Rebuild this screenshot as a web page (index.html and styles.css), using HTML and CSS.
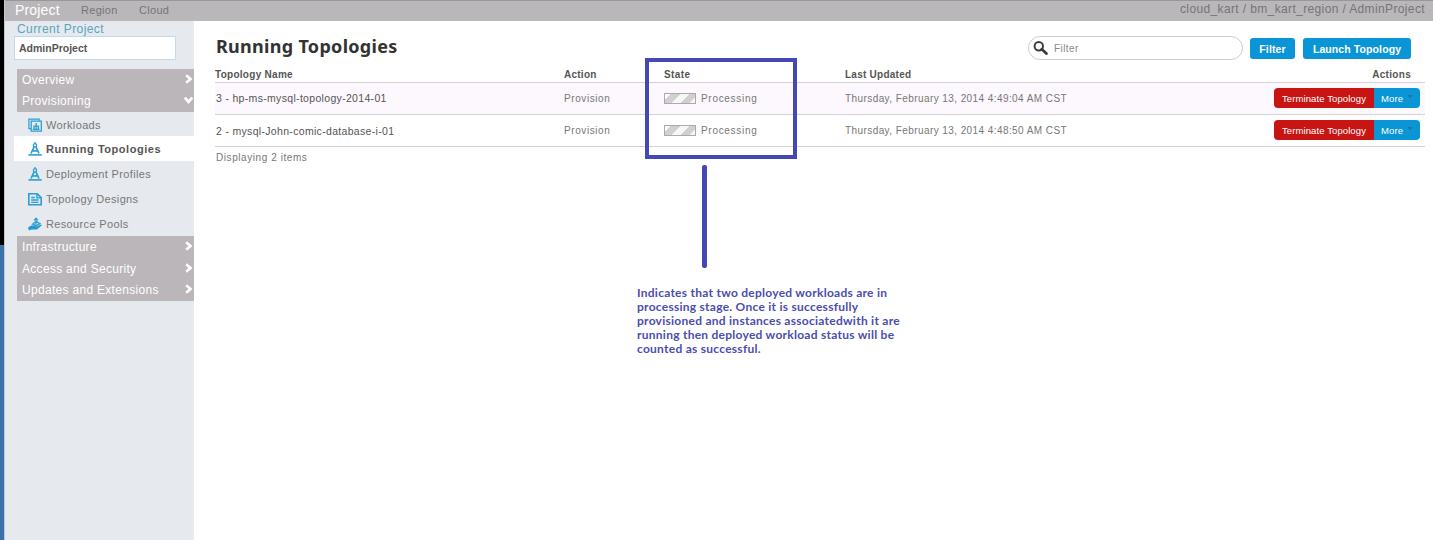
FILE: index.html
```html
<!DOCTYPE html>
<html lang="en">
<head>
<meta charset="utf-8">
<title>Running Topologies</title>
<link rel="stylesheet" href="styles.css">
</head>
<body>
<svg width="0" height="0" class="defs">
  <symbol id="chev" viewBox="0 0 8 10"><path d="M1.7 1.3 6 5 1.7 8.7" fill="none" stroke="#fff" stroke-width="2.7"/></symbol>
  <symbol id="compass" viewBox="0 0 14 14"><path d="M.5 12.9h13.2" stroke-width="1.6"/><circle cx="7" cy="3.3" r="1.6" stroke-width="1.3"/><path d="M7 .3v1.4M6.1 4.8 3 11.5M7.9 4.8l3.1 6.7M4.2 8.4q2.8 1.2 5.6 0" stroke-width="1.7"/></symbol>
</svg>
<div class="desktop">
  <div class="window">
    <header class="topbar">
      <nav class="tabs"><a class="tab current">Project</a><a class="tab region">Region</a><a class="tab cloud">Cloud</a></nav>
      <div class="crumbs">cloud_kart / bm_kart_region / AdminProject</div>
    </header>
    <div class="body">
      <aside class="sidebar">
        <div class="cur-label">Current Project</div>
        <div class="project">AdminProject</div>
        <div class="group first"><span>Overview</span><svg class="chev"><use href="#chev"/></svg></div>
        <div class="group"><span class="prov">Provisioning</span><svg class="chev down"><use href="#chev"/></svg></div>
        <ul class="menu">
          <li><svg class="ico" viewBox="0 0 14 14"><path d="M3 10.7H.9V1.2h10.3v1.5" stroke-width="1.2"/><path d="M3.2 3.2h10.1v10H3.2z" stroke-width="1.3"/><path d="M4.8 11.4h6.8M8.2 5v2.6M6 11V8.2h4.4V11M8.2 8v3" stroke-width="1.3"/></svg><span class="m1">Workloads</span></li>
          <li class="active"><svg class="ico"><use href="#compass"/></svg><span class="m2">Running Topologies</span></li>
          <li><svg class="ico"><use href="#compass"/></svg><span class="m3">Deployment Profiles</span></li>
          <li><svg class="ico" viewBox="0 0 14 14"><path d="M.8 1.8h8.4l4 3.8v7.2H.8z" stroke-width="1.6"/><path d="M8.9 1.8v4.1h4.3M3.2 5.5h3.6M3.2 8h7.4M3.2 10.4h7.4" stroke-width="1.4"/></svg><span class="m4">Topology Designs</span></li>
          <li><svg class="ico" viewBox="0 0 14 14"><path d="M0 10.6 3.3 8.4h3.4l2 1 4.4-1.9.8.8-5 4.3H3.6L1 13.6z" fill="#1d9bd7" stroke="none"/><path d="M8 1.5v6M6 3.4 8 1.2l2 2.2M4.5 7.2 8 4.4l4 2.4L8 8.7z" stroke-width="1.3"/></svg><span class="m5">Resource Pools</span></li>
        </ul>
        <div class="group"><span>Infrastructure</span><svg class="chev"><use href="#chev"/></svg></div>
        <div class="group"><span>Access and Security</span><svg class="chev"><use href="#chev"/></svg></div>
        <div class="group"><span>Updates and Extensions</span><svg class="chev"><use href="#chev"/></svg></div>
      </aside>
      <main class="main">
        <div class="heading">
          <h1>Running Topologies</h1>
          <div class="tools">
            <div class="search"><svg class="mag" viewBox="0 0 15 14"><circle cx="5.8" cy="5.3" r="4.2" fill="none" stroke="#3b3b3b" stroke-width="2"/><path d="m8.8 8.3 4.6 4.2" stroke="#3b3b3b" stroke-width="2.8" stroke-linecap="round"/></svg><span>Filter</span></div>
            <button class="btn filter">Filter</button>
            <button class="btn launch">Launch Topology</button>
          </div>
        </div>
        <div class="table">
          <div class="row head"><div>Topology Name</div><div class="h-act">Action</div><div class="h-st">State</div><div class="h-upd">Last Updated</div><div class="h-actions">Actions</div></div>
          <div class="row item tinted"><div class="name n1">3 - hp-ms-mysql-topology-2014-01</div><div class="action">Provision</div><div class="state"><i class="bar"></i><span>Processing</span></div><div>Thursday, February 13, 2014 4:49:04 AM CST</div><div class="ops"><button class="term">Terminate Topology</button><button class="more">More<i class="caret"></i></button></div></div>
          <div class="row item"><div class="name n2">2 - mysql-John-comic-database-i-01</div><div class="action">Provision</div><div class="state"><i class="bar"></i><span>Processing</span></div><div>Thursday, February 13, 2014 4:48:50 AM CST</div><div class="ops"><button class="term">Terminate Topology</button><button class="more">More<i class="caret"></i></button></div></div>
        </div>
        <div class="count">Displaying 2 items</div>
      </main>
    </div>
  </div>
  <div class="mark-box"></div>
  <div class="mark-line"></div>
  <div class="note"><div class="l1">Indicates that two deployed workloads are in</div><div class="l2">processing stage. Once it is successfully</div><div class="l3">provisioned and instances associatedwith it are</div><div class="l4">running then deployed workload status will be</div><div class="l5">counted as successful.</div></div>
</div>
</body>
</html>
```
FILE: styles.css
```css
* { box-sizing: border-box; }
body { margin: 0; background: #fff; font-family: "Liberation Sans", Arial, sans-serif; font-size: 10px; color: #777; white-space: nowrap; }
button { font-family: inherit; border: 0; padding: 0; margin: 0; white-space: nowrap; }
.defs { position: absolute; }
.desktop { position: relative; width: 1433px; height: 540px; padding-left: 4px; overflow: hidden; background: linear-gradient(#000 245px, #3b70a8 245px); }
.window { height: 540px; display: flex; flex-direction: column; background: #fff; border-left: 1px solid #c5c8cd; }
.topbar { height: 21px; flex: none; display: flex; justify-content: space-between; background: #bab7ba; border-top: 1px solid #999799; }
.tabs { display: flex; padding-left: 10px; line-height: 18px; }
.tab { font-size: 11px; letter-spacing: .3px; color: #777477; }
.tab.current { width: 66px; font-size: 14px; letter-spacing: .18px; color: #fff; }
.tab.region { width: 58px; }
.crumbs { padding-right: 8px; font-size: 12px; line-height: 16px; letter-spacing: .37px; color: #777477; }
.body { flex: 1; display: flex; }
.sidebar { width: 189px; background: #e6e9ee; }
.cur-label { padding-left: 12px; height: 15px; line-height: 16px; font-size: 12px; letter-spacing: .42px; color: #5aa5bd; }
.project { margin-left: 9px; width: 162px; height: 24px; padding-left: 4px; border: 1px solid #c5dae8; background: #fff; font-weight: bold; font-size: 10.5px; line-height: 22px; color: #555; }
.group { height: 21.6px; margin-left: 12px; padding: 0 1px 0 5px; display: flex; justify-content: space-between; align-items: center; background: #bab6ba; color: #fff; font-size: 12px; letter-spacing: .3px; }
.group.first { margin-top: 9px; }
.chev { width: 9px; height: 10px; margin-top: -2px; }
.chev.down { transform: rotate(90deg); }
.menu { list-style: none; margin: 0; padding: 0 0 0 9px; height: 124px; }
.menu li { height: 25px; display: flex; align-items: center; gap: 4px; padding-left: 14px; font-size: 11px; letter-spacing: .35px; color: #777; }
.menu li span { padding-top: 1px; }
.menu li:first-child { height: 24px; }
.menu li.active { background: #fff; color: #555; font-weight: bold; letter-spacing: .53px; }
.ico { width: 14px; height: 14px; margin-top: 1px; fill: none; stroke: #2b9fd2; }
.main { flex: 1; padding: 0 8px 0 21px; background: #fff; }
.heading { display: flex; justify-content: space-between; height: 47px; padding-top: 15px; }
h1 { margin: 0; padding-left: 1px; margin-top: -1px; font: bold 18px/22px "Noto Sans", sans-serif; letter-spacing: .3px; color: #333; }
.tools { display: flex; align-items: flex-start; padding-right: 14px; }
.search { width: 215px; height: 24px; border: 1px solid #ccc; border-radius: 12px; display: flex; align-items: center; padding-left: 4px; gap: 6px; font-size: 10px; letter-spacing: .4px; color: #888; }
.mag { width: 15px; height: 14px; }
.btn { margin-top: 2px; height: 21px; border-radius: 3px; background: #0a96d6; color: #fff; font-size: 10.5px; font-weight: bold; letter-spacing: .1px; }
.filter { width: 45px; margin-left: 7px; }
.launch { width: 108px; margin-left: 8px; }
.row { display: grid; grid-template-columns: 349px 100px 181px 1fr auto; align-items: center; border-bottom: 1px solid #d3d1d4; }
.row.head { height: 15px; line-height: 14px; font-weight: bold; color: #555; letter-spacing: .28px; }
.h-act, .h-upd { letter-spacing: .25px; }
.h-st { letter-spacing: .4px; }
.h-actions { padding-right: 14px; letter-spacing: .3px; }
.item { height: 32px; letter-spacing: .42px; }
.item > div { margin-top: -1px; }
.item > .ops { margin-top: -1px; }
.tinted { background: #fcf8fd; }
.name { padding-left: 1px; color: #555; font-size: 10.5px; letter-spacing: .32px; }
.n2 { padding-top: 2px; }
.action { letter-spacing: .58px; }
.state { display: flex; align-items: center; gap: 5px; letter-spacing: .7px; }
.bar { width: 32px; height: 11px; border: 1px solid #aaa; background: linear-gradient(135deg, #fff 4px, #d0d0d0 4px 11px, #f7f7f7 11px 17px, #d0d0d0 17px 24px, #f7f7f7 24px); }
.ops { display: flex; padding-right: 5px; }
.ops button { height: 20px; color: #fff; font-size: 9.5px; letter-spacing: .1px; }
.ops .term { width: 100px; background: #c91414; border-radius: 4px 0 0 4px; }
.ops .more { width: 46px; padding-left: 7px; background: #0a96d6; border-radius: 0 4px 4px 0; display: flex; align-items: center; gap: 4px; }
.caret { margin-top: -3px; border: 3px solid transparent; border-top-color: #28719a; border-bottom: 0; }
.count { padding-left: 1px; margin-top: 5px; line-height: 12px; letter-spacing: .57px; }
.mark-box { position: absolute; left: 645px; top: 58px; width: 152px; height: 101px; border: 4px solid #4448b5; }
.mark-line { position: absolute; left: 702px; top: 165px; width: 5px; height: 103px; border-radius: 2px; background: #4448b5; }
.note { position: absolute; left: 637px; top: 286px; font: bold 12px/14px Lato, sans-serif; letter-spacing: .26px; color: #4a4eac; }
```
